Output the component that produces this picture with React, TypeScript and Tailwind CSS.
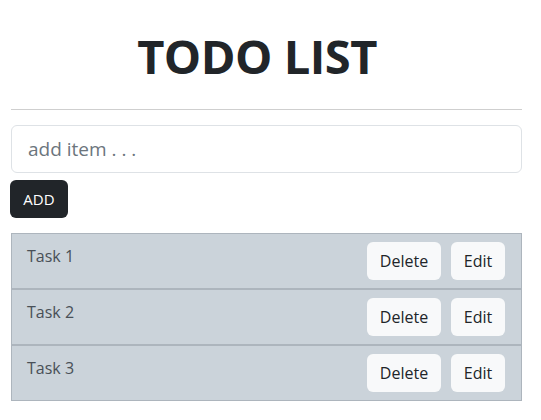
import { useState } from "react";

const font = { fontFamily: '"Open Sans", "Noto Sans", sans-serif' };

export default function App() {
  const [tasks] = useState(["Task 1", "Task 2", "Task 3"]);

  return (
    <div className="min-h-screen bg-white pl-[11px] pr-[19px] text-[#212529]" style={font}>
      {/* Header */}
      <h1 className="pt-[28px] pr-[19px] text-center text-[47px] font-bold leading-[1.2] tracking-[-0.5px]">TODO LIST</h1>
      <hr className="mt-[25px] border-t border-[#cfcfcf]" />

      {/* Add form */}
      <input
        type="text"
        placeholder="add item . . ."
        className="mt-[15px] block h-[48px] w-full rounded-[6px] border border-[#dee2e6] px-[16px] text-[19px] placeholder:text-[#6c757d] outline-none"
      />
      <button className="-ml-px mt-[7px] h-[38px] w-[58px] rounded-[6px] bg-[#212529] text-[15px] text-white">ADD</button>

      {/* Task list */}
      <ul className="mt-[15px] border border-[#adb5bd]">
        {tasks.map((t, idx) => (
          <li
            key={idx}
            className={`flex justify-between bg-[#cbd3da] py-[8px] pl-[15px] pr-[16px] ${idx > 0 ? "border-t-2 border-[#adb5bd]" : ""}`}
          >
            <span className="pt-[2px] text-[16px] leading-[1.5] text-[#495057]">{t}</span>
            <div className="flex gap-[10px]">
              <button className="h-[38px] w-[74px] rounded-[6px] bg-[#f8f9fa] text-[16px] text-[#212529]">Delete</button>
              <button className="h-[38px] w-[54px] rounded-[6px] bg-[#f8f9fa] text-[16px] text-[#212529]">Edit</button>
            </div>
          </li>
        ))}
      </ul>
    </div>
  );
}
